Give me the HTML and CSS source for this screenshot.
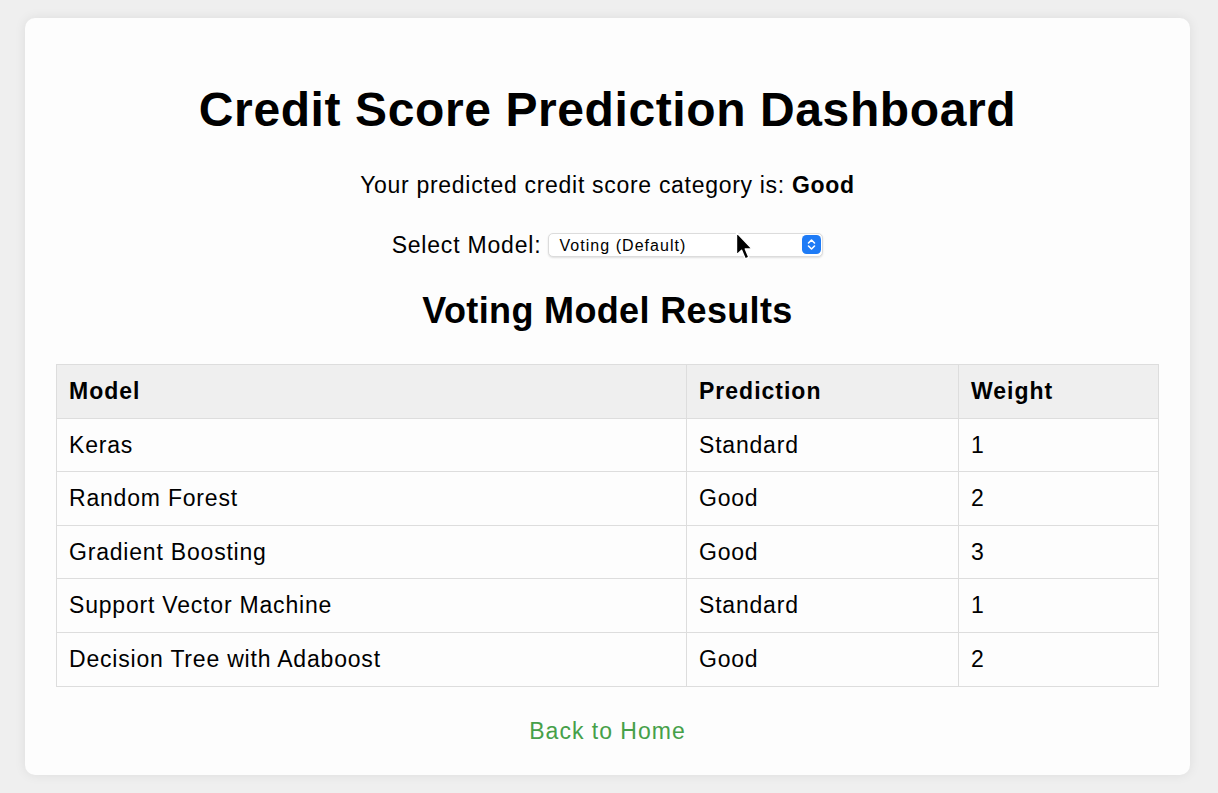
FILE: index.html
```html
<!DOCTYPE html>
<html lang="en">
<head>
<meta charset="utf-8">
<title>Credit Score Prediction Dashboard</title>
<link rel="stylesheet" href="styles.css">
</head>
<body>
<main class="card">
  <h1 class="title">Credit Score Prediction Dashboard</h1>
  <p class="result">Your predicted credit score category is: <strong>Good</strong></p>
  <form class="model-form">
    <label class="model-label" for="model">Select Model:</label>
    <div class="select-wrap">
      <select id="model" class="model-select">
        <option>Voting (Default)</option>
        <option>Keras</option>
        <option>Random Forest</option>
        <option>Gradient Boosting</option>
        <option>Support Vector Machine</option>
        <option>Decision Tree with Adaboost</option>
      </select>
      <span class="stepper">
        <svg width="19" height="19" viewBox="0 0 19 19" aria-hidden="true">
          <rect x="0" y="0" width="19" height="19" rx="4.5" fill="#1e7bf6"/>
          <path d="M6.5 8 L9.5 5 L12.5 8" fill="none" stroke="#fff" stroke-width="1.6" stroke-linecap="round" stroke-linejoin="round"/>
          <path d="M6.5 11 L9.5 14 L12.5 11" fill="none" stroke="#fff" stroke-width="1.6" stroke-linecap="round" stroke-linejoin="round"/>
        </svg>
      </span>
      <span class="cursor">
        <svg width="21" height="31" viewBox="0 0 21 31" aria-hidden="true">
          <path d="M1.5 1.5 L1.5 24 L6.6 19.2 L10.2 27.8 L13.8 26.3 L10.3 18 L17.2 18 Z" fill="#000" stroke="#fff" stroke-width="1.4" stroke-linejoin="round"/>
        </svg>
      </span>
    </div>
  </form>
  <h2 class="subtitle">Voting Model Results</h2>
  <table class="results">
    <thead>
      <tr><th class="col-model">Model</th><th class="col-pred">Prediction</th><th class="col-weight">Weight</th></tr>
    </thead>
    <tbody>
      <tr><td>Keras</td><td>Standard</td><td>1</td></tr>
      <tr><td>Random Forest</td><td>Good</td><td>2</td></tr>
      <tr><td>Gradient Boosting</td><td>Good</td><td>3</td></tr>
      <tr><td>Support Vector Machine</td><td>Standard</td><td>1</td></tr>
      <tr><td>Decision Tree with Adaboost</td><td>Good</td><td>2</td></tr>
    </tbody>
  </table>
  <a class="home-link" href="#">Back to Home</a>
</main>
</body>
</html>
```

FILE: styles.css
```css
* { box-sizing: border-box; }

html, body {
  height: 100%;
}

body {
  margin: 0;
  padding: 18px 28px 18px 25px;
  background: #efefef;
  font-family: "Liberation Sans", Arial, Helvetica, sans-serif;
  color: #000;
}

.card {
  height: 757px;
  background: #fdfdfd;
  border-radius: 10px;
  box-shadow: 0 0 12px rgba(0, 0, 0, 0.08);
  padding: 65px 31px 0 31px;
  display: flex;
  flex-direction: column;
  align-items: center;
}

.title {
  margin: 0;
  font-size: 48px;
  line-height: 54px;
  font-weight: bold;
  letter-spacing: 0.6px;
  text-align: center;
}

.result {
  margin: 35px 0 0 0;
  font-size: 23px;
  line-height: 26px;
  letter-spacing: 0.7px;
}

.model-form {
  margin-top: 34px;
  display: flex;
  align-items: center;
  gap: 7px;
  height: 26px;
}

.model-label {
  font-size: 23px;
  line-height: 26px;
  letter-spacing: 0.8px;
}

.select-wrap {
  position: relative;
  width: 275px;
  height: 24px;
}

.model-select {
  appearance: none;
  -webkit-appearance: none;
  width: 100%;
  height: 100%;
  margin: 0;
  padding: 0 30px 0 10px;
  border: 1px solid #dcdcdc;
  border-radius: 5px;
  background: #fff;
  box-shadow: 0 1px 2px rgba(0, 0, 0, 0.12);
  font-family: "Liberation Sans", Arial, Helvetica, sans-serif;
  font-size: 16px;
  letter-spacing: 1.05px;
  color: #000;
}

.stepper {
  position: absolute;
  right: 2px;
  top: 2px;
  width: 19px;
  height: 19px;
  display: block;
  pointer-events: none;
}

.stepper svg, .cursor svg { display: block; }

.cursor {
  position: absolute;
  left: 187px;
  top: -2px;
  pointer-events: none;
}

.subtitle {
  margin: 32px 0 0 0;
  font-size: 36px;
  line-height: 42px;
  font-weight: bold;
  letter-spacing: 0.35px;
}

.results {
  margin-top: 32px;
  width: 100%;
  border-collapse: collapse;
  font-size: 23px;
}

.results th,
.results td {
  border: 1px solid #dddddd;
  padding: 14px 12px;
  line-height: 24.6px;
  text-align: left;
  letter-spacing: 0.8px;
}

.results th {
  background: #efefef;
  font-weight: bold;
  letter-spacing: 1px;
}

.col-model { width: 630px; }
.col-pred { width: 272px; }

.home-link {
  margin-top: 31px;
  font-size: 23px;
  line-height: 26px;
  letter-spacing: 1px;
  color: #46a049;
  text-decoration: none;
}
```
